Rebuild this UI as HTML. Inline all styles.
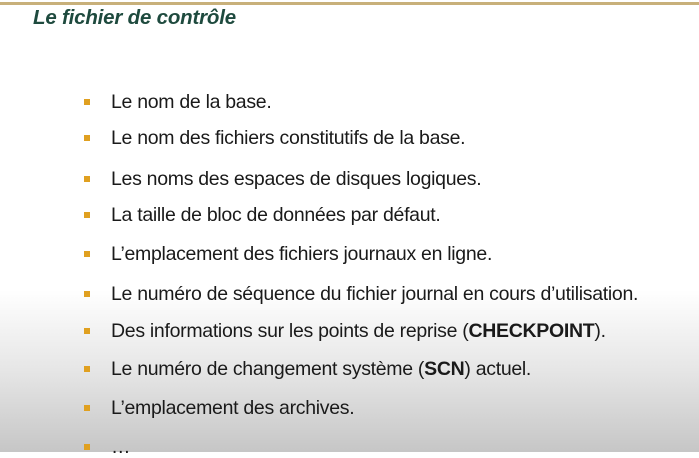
<!DOCTYPE html>
<html><head><meta charset="utf-8"><style>
html,body{margin:0;padding:0}
body{width:699px;height:452px;overflow:hidden;position:relative;font-family:"Liberation Sans",sans-serif;
background:linear-gradient(to bottom,#fff 0,#fff 290px,#e6e6e6 370px,#c6c6c6 452px)}
.top{position:absolute;left:0;top:2px;width:699px;height:3px;background:#c8b07a}
h1{position:absolute;left:33px;top:6px;margin:0;font-size:20.5px;font-style:italic;font-weight:bold;color:#1e4a3e;letter-spacing:-0.2px;line-height:24px}
.it{position:absolute;left:111px;font-size:19.5px;color:#1a1a1a;letter-spacing:-0.3px;white-space:nowrap;line-height:22px}
.it:before{content:"";position:absolute;left:-27px;top:8px;width:6px;height:6px;background:#e0a020}
</style></head><body>
<div class="top"></div>
<h1>Le fichier de contrôle</h1>
<div class="it" style="top:91px">Le nom de la base.</div>
<div class="it" style="top:127px">Le nom des fichiers constitutifs de la base.</div>
<div class="it" style="top:168px">Les noms des espaces de disques logiques.</div>
<div class="it" style="top:204px">La taille de bloc de données par défaut.</div>
<div class="it" style="top:243px">L’emplacement des fichiers journaux en ligne.</div>
<div class="it" style="top:283px">Le numéro de séquence du fichier journal en cours d’utilisation.</div>
<div class="it" style="top:320px">Des informations sur les points de reprise (<b>CHECKPOINT</b>).</div>
<div class="it" style="top:358px">Le numéro de changement système (<b>SCN</b>) actuel.</div>
<div class="it" style="top:397px">L’emplacement des archives.</div>
<div class="it" style="top:436px">…</div>
</body></html>
